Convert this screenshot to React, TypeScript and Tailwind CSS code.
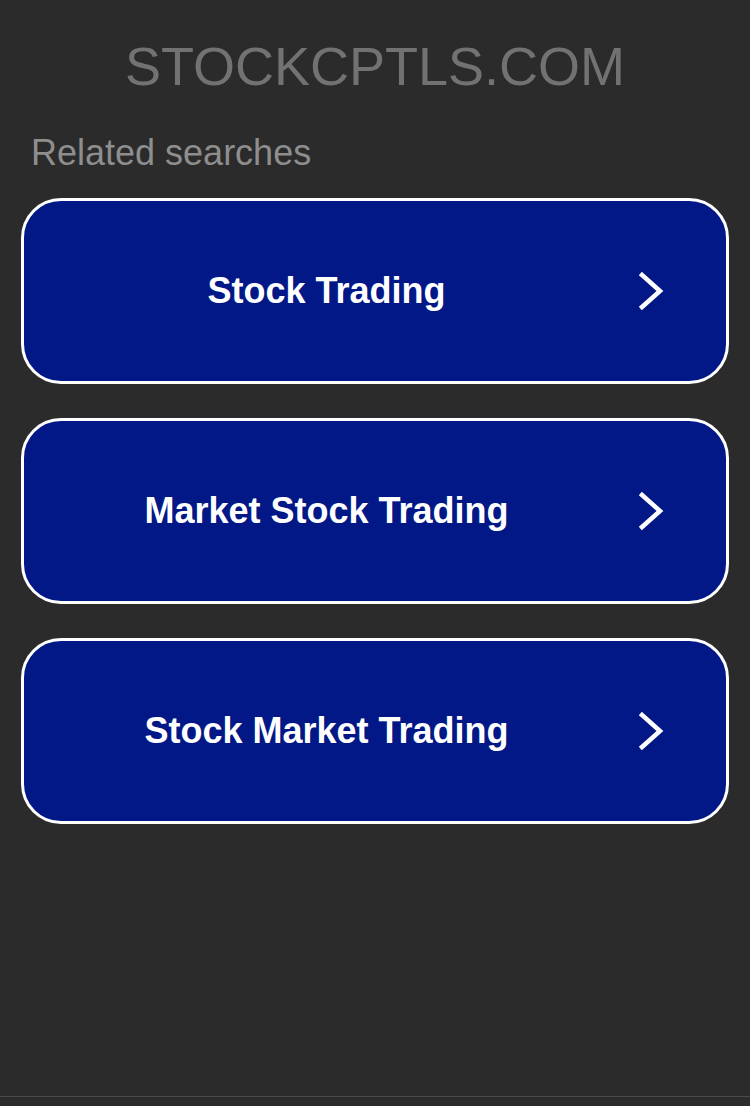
import React from 'react'

const searches = ['Stock Trading', 'Market Stock Trading', 'Stock Market Trading']

function Chevron() {
  return (
    <svg width="30" height="40" viewBox="0 0 30 40" fill="none" aria-hidden>
      <polyline points="5,4 23,20 5,36" stroke="white" strokeWidth="4.5" strokeLinecap="square" strokeLinejoin="miter" />
    </svg>
  )
}

export default function App() {
  return (
    <div className="flex h-[1106px] w-full flex-col bg-[#2b2b2b] font-['Liberation_Sans',Arial,sans-serif]">
      <h1 className="pt-[39px] text-center text-[54px] font-light leading-none text-[#727272]">
        STOCKCPTLS.COM
      </h1>

      <p className="mt-[42px] pl-[31px] text-[36px] leading-none text-[#8e8e8e]">Related searches</p>

      <div className="mt-[27px] flex flex-col gap-[34px] px-[21px]">
        {searches.map((s) => (
          <a
            key={s}
            href="#"
            className="flex h-[186px] items-center rounded-[40px] border-[3px] border-white bg-[#021887]"
          >
            <span className="flex-1 text-center text-[36px] font-bold leading-none text-white">{s}</span>
            <span className="flex w-[97px] items-center pl-[8px]">
              <Chevron />
            </span>
          </a>
        ))}
      </div>

      <div className="mt-auto mb-[9px] h-px w-full bg-[#4a4a4a]" />
    </div>
  )
}
